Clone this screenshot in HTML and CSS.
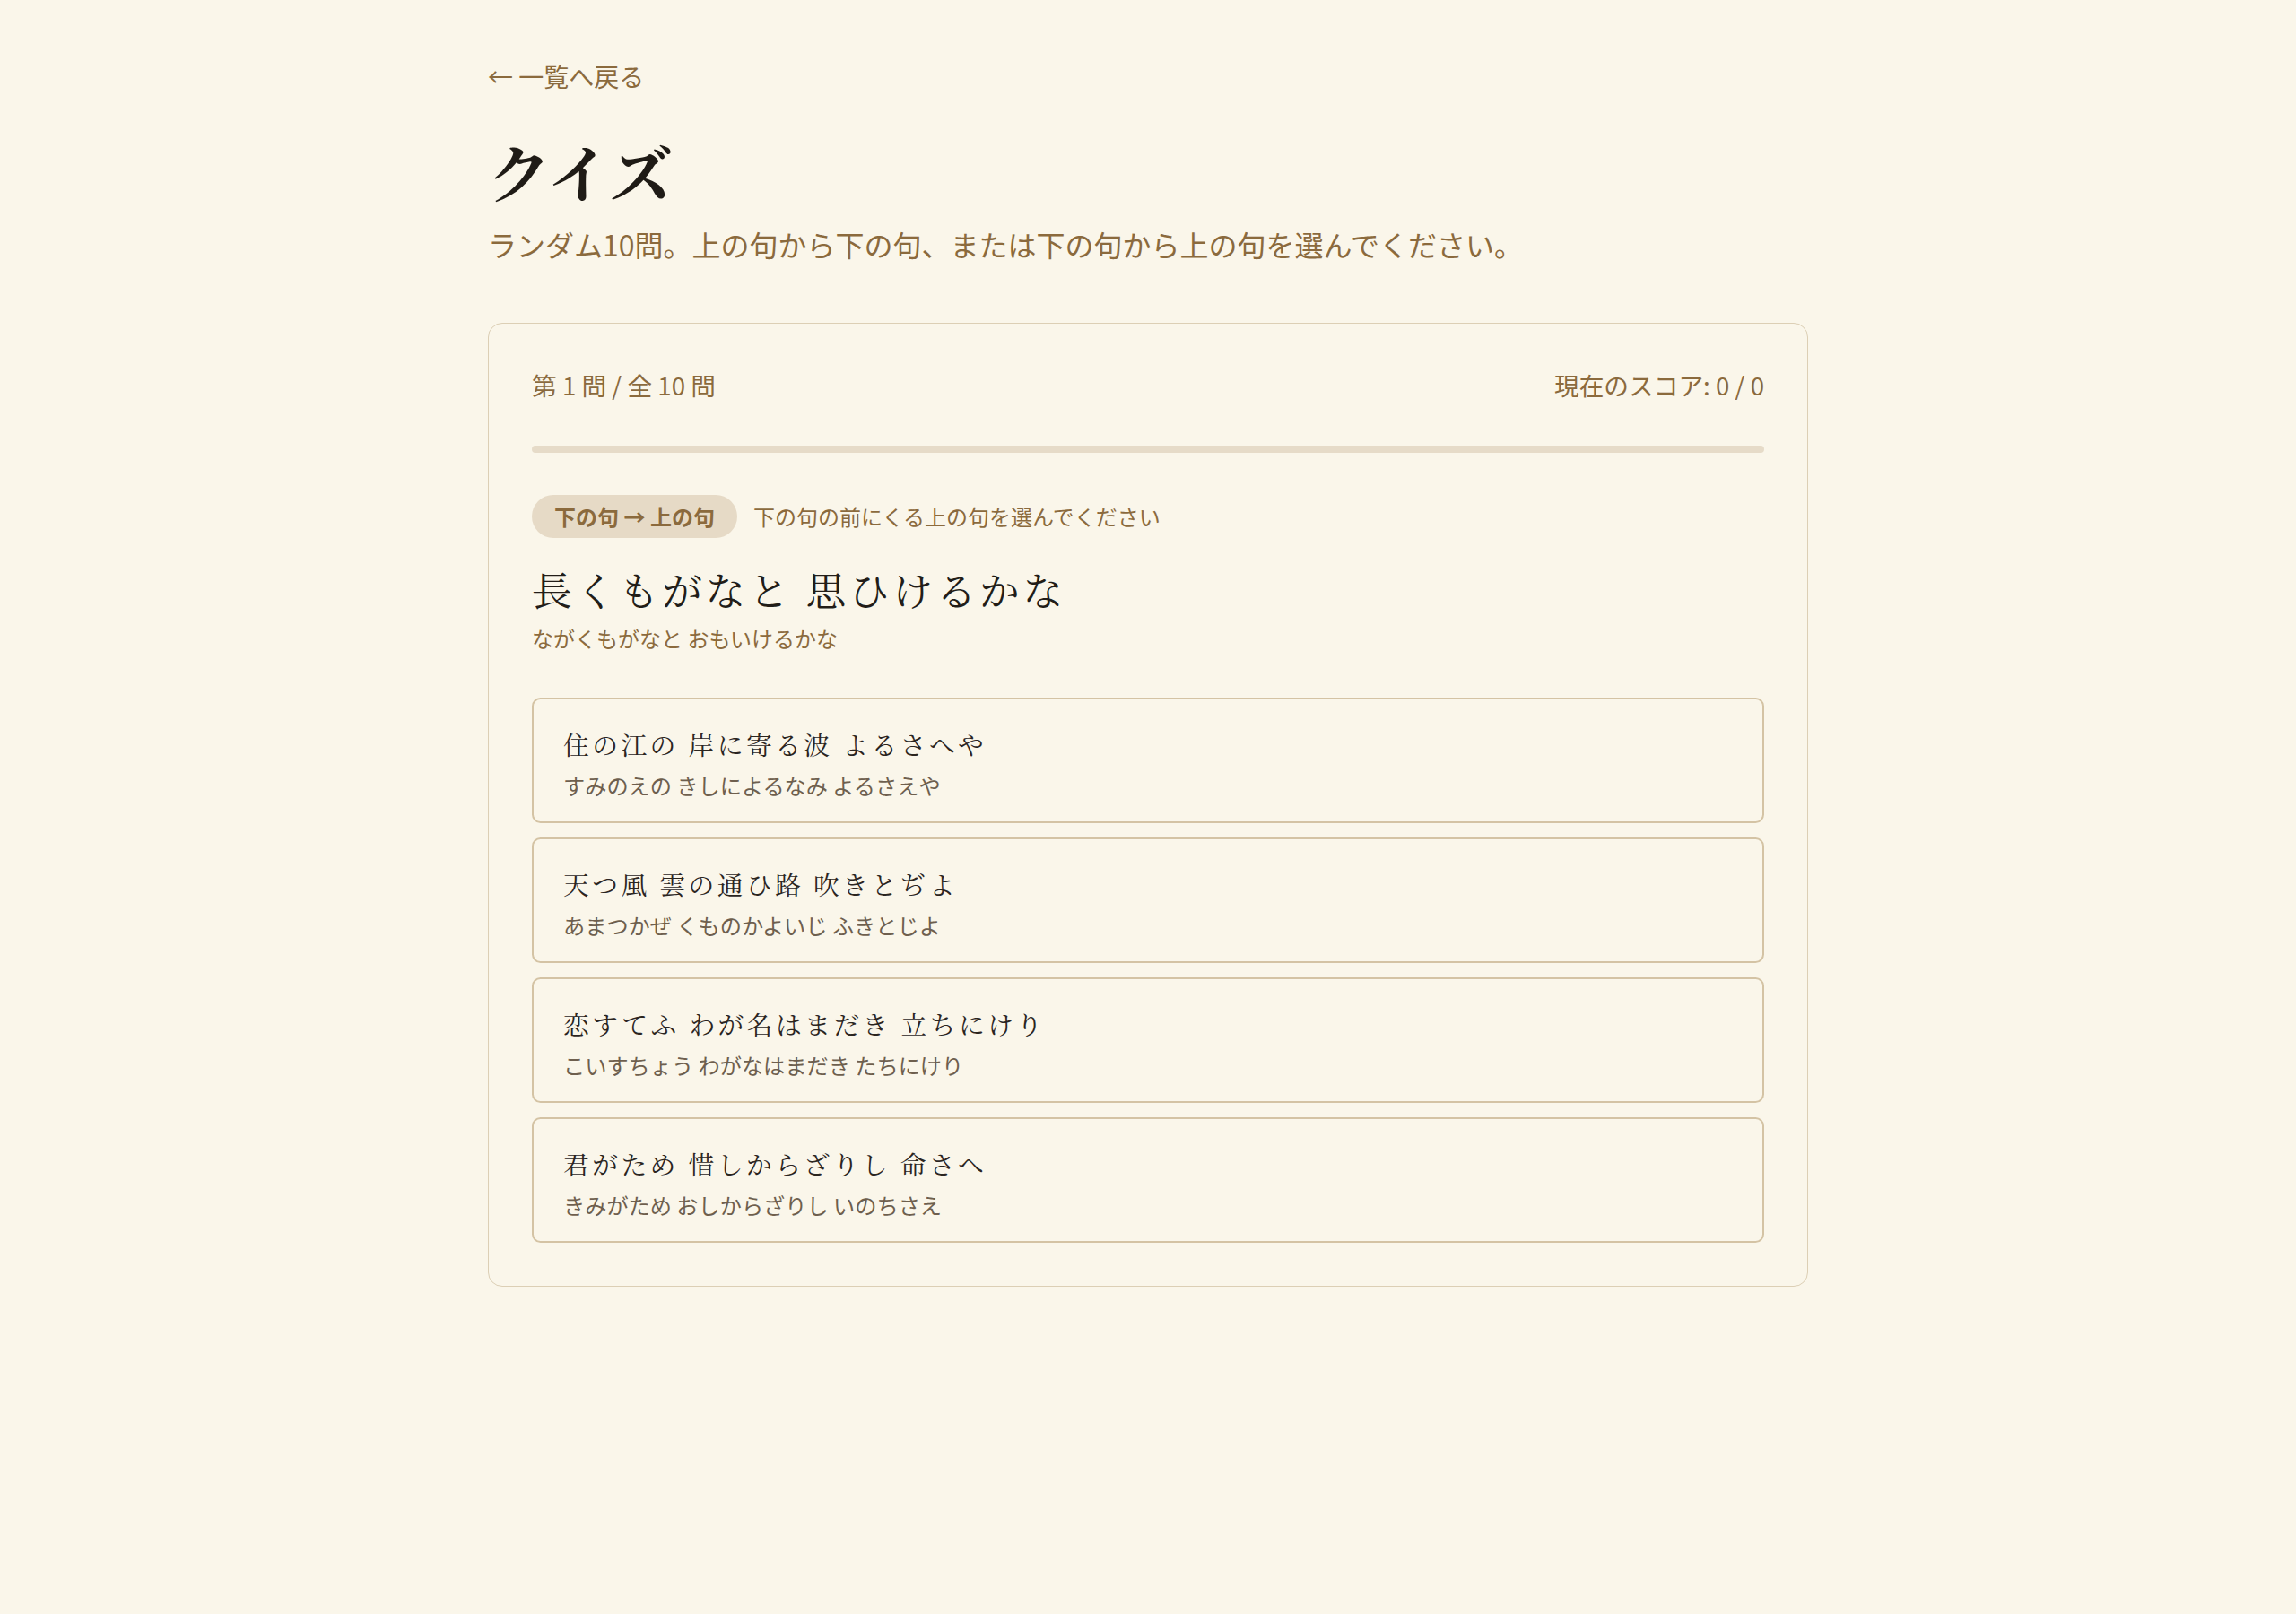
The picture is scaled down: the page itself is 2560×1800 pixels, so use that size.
FILE: index.html
```html
<!DOCTYPE html>
<html lang="ja">
<head>
<meta charset="utf-8">
<title>クイズ</title>
<link rel="stylesheet" href="styles.css">
</head>
<body>
<main class="page">
  <a class="back" href="#">← 一覧へ戻る</a>
  <h1 class="title">クイズ</h1>
  <p class="lead">ランダム10問。上の句から下の句、または下の句から上の句を選んでください。</p>

  <section class="card">
    <div class="meta">
      <span>第 1 問 / 全 10 問</span>
      <span>現在のスコア: 0 / 0</span>
    </div>
    <div class="progress"><div class="progress-fill" style="width:0%"></div></div>

    <div class="prompt-row">
      <span class="tag">下の句 → 上の句</span>
      <span class="hint">下の句の前にくる上の句を選んでください</span>
    </div>
    <div class="poem">長くもがなと 思ひけるかな</div>
    <div class="reading">ながくもがなと おもいけるかな</div>

    <div class="options">
      <button class="option">
        <span class="opt-main">住の江の 岸に寄る波 よるさへや</span>
        <span class="opt-read">すみのえの きしによるなみ よるさえや</span>
      </button>
      <button class="option">
        <span class="opt-main">天つ風 雲の通ひ路 吹きとぢよ</span>
        <span class="opt-read">あまつかぜ くものかよいじ ふきとじよ</span>
      </button>
      <button class="option">
        <span class="opt-main">恋すてふ わが名はまだき 立ちにけり</span>
        <span class="opt-read">こいすちょう わがなはまだき たちにけり</span>
      </button>
      <button class="option">
        <span class="opt-main">君がため 惜しからざりし 命さへ</span>
        <span class="opt-read">きみがため おしからざりし いのちさえ</span>
      </button>
    </div>
  </section>
</main>
</body>
</html>
```

FILE: styles.css
```css
html, body {
  margin: 0;
  padding: 0;
  background: #faf6ea;
}

body {
  font-family: "Noto Sans CJK JP", "Noto Sans", sans-serif;
  color: #8b6a3d;
}

.page {
  width: 1472px;
  margin: 0 auto;
  padding-top: 64px;
  padding-bottom: 80px;
}

.back {
  display: inline-block;
  font-size: 28px;
  line-height: 1.5;
  color: #8b6a3d;
  text-decoration: none;
}

.title {
  margin: 46px 0 0;
  font-family: "Noto Serif CJK JP", serif;
  font-weight: 700;
  font-size: 70px;
  line-height: 1.1;
  color: #1f1b16;
}

.lead {
  margin: 19px 0 0;
  font-size: 32px;
  line-height: 1.5;
  color: #8b6a3d;
}

.card {
  margin-top: 64px;
  border: 1.6px solid #dccfb5;
  border-radius: 16px;
  padding: 48px;
}

.meta {
  display: flex;
  justify-content: space-between;
  font-size: 27.7px;
  line-height: 1.45;
  color: #8b6a3d;
}

.progress {
  margin-top: 48px;
  height: 8px;
  border-radius: 4px;
  background: #e6dbc8;
  overflow: hidden;
}

.progress-fill {
  height: 100%;
  background: #8b6a3d;
}

.prompt-row {
  margin-top: 46.5px;
  display: flex;
  align-items: center;
  gap: 18px;
}

.tag {
  display: inline-flex;
  align-items: center;
  height: 48px;
  padding: 0 25px;
  border-radius: 24px;
  background: #e6dac6;
  font-size: 24px;
  font-weight: 700;
  color: #8b6a3d;
}

.hint {
  font-size: 24px;
  color: #8b6a3d;
}

.poem {
  margin-top: 26.5px;
  font-family: "Noto Serif CJK JP", serif;
  font-size: 44.8px;
  line-height: 1.4;
  letter-spacing: 3.6px;
  color: #221d18;
}

.reading {
  margin-top: 5px;
  font-size: 24px;
  line-height: 1.5;
  color: #8b6a3d;
}

.options {
  margin-top: 48px;
  display: flex;
  flex-direction: column;
  gap: 16px;
}

.option {
  display: flex;
  flex-direction: column;
  align-items: flex-start;
  text-align: left;
  width: 100%;
  margin: 0;
  padding: 24px 33px;
  border: 2px solid #d4c3a4;
  border-radius: 9.6px;
  background: transparent;
  cursor: pointer;
  font: inherit;
}

.opt-main {
  font-family: "Noto Serif CJK JP", serif;
  font-size: 28.8px;
  line-height: 52px;
  letter-spacing: 3.4px;
  color: #2b251f;
}

.opt-read {
  margin-top: 4px;
  font-size: 24.2px;
  line-height: 32px;
  color: #6e5f4e;
}
```
